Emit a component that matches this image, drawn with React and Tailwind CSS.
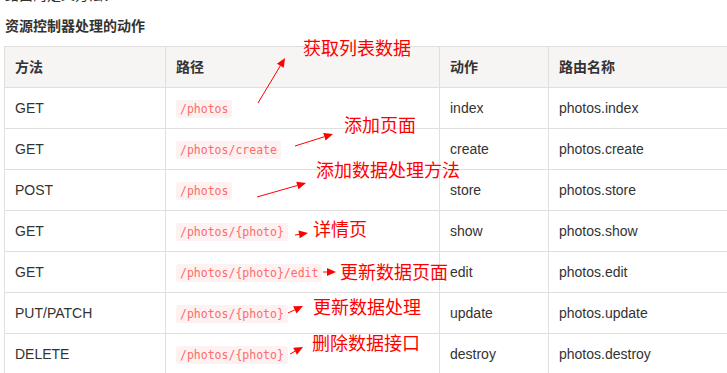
import React from 'react';

const rows = [
  { method: 'GET', path: '/photos', action: 'index', name: 'photos.index' },
  { method: 'GET', path: '/photos/create', action: 'create', name: 'photos.create' },
  { method: 'POST', path: '/photos', action: 'store', name: 'photos.store' },
  { method: 'GET', path: '/photos/{photo}', action: 'show', name: 'photos.show' },
  { method: 'GET', path: '/photos/{photo}/edit', action: 'edit', name: 'photos.edit' },
  { method: 'PUT/PATCH', path: '/photos/{photo}', action: 'update', name: 'photos.update' },
  { method: 'DELETE', path: '/photos/{photo}', action: 'destroy', name: 'photos.destroy' },
];

// hand-drawn annotations over the table
const notes = [
  { text: '获取列表数据', x: 303, y: 37 },
  { text: '添加页面', x: 344, y: 114 },
  { text: '添加数据处理方法', x: 316, y: 159 },
  { text: '详情页', x: 313, y: 218 },
  { text: '更新数据页面', x: 340, y: 261 },
  { text: '更新数据处理', x: 313, y: 296 },
  { text: '删除数据接口', x: 312, y: 332 },
];

const arrows = [
  [258, 103, 285, 58],
  [295, 146, 333, 134],
  [257, 197, 306, 183],
  [295, 235, 308, 233],
  [323, 272, 336, 272],
  [288, 313, 303, 306],
  [290, 354, 303, 347],
];

const Arrow = ({ x1, y1, x2, y2 }) => {
  const a = Math.atan2(y2 - y1, x2 - x1);
  const len = 9;
  const w = 4;
  const bx = x2 - len * Math.cos(a);
  const by = y2 - len * Math.sin(a);
  const p1 = `${bx + w * Math.sin(a)},${by - w * Math.cos(a)}`;
  const p2 = `${bx - w * Math.sin(a)},${by + w * Math.cos(a)}`;
  return (
    <g>
      <line x1={x1} y1={y1} x2={bx} y2={by} stroke="#ff0000" strokeWidth="1" />
      <polygon points={`${x2},${y2} ${p1} ${p2}`} fill="#ff0000" />
    </g>
  );
};

const App = () => {
  return (
    <div className="relative w-[727px] h-[373px] overflow-hidden bg-white text-[#333] font-['Liberation_Sans','Noto_Sans_CJK_SC',sans-serif]">
      <p className="-mt-[15px] pl-[5px] text-[14px] leading-[20px]">路由的定义方法：</p>
      <p className="mt-[11px] pl-[5px] text-[14px] leading-[20px] font-bold">资源控制器处理的动作</p>

      <table className="mt-[10px] ml-[4px] w-[820px] border-collapse table-fixed text-[14px]">
        <colgroup>
          <col className="w-[161px]" />
          <col className="w-[274px]" />
          <col className="w-[109px]" />
          <col />
        </colgroup>
        <thead>
          <tr className="h-[41px] bg-[#f6f5f4]">
            <th className="border border-[#dfdfdf] px-[10px] text-left font-bold">方法</th>
            <th className="border border-[#dfdfdf] px-[10px] text-left font-bold">路径</th>
            <th className="border border-[#dfdfdf] px-[10px] text-left font-bold">动作</th>
            <th className="border border-[#dfdfdf] px-[10px] text-left font-bold">路由名称</th>
          </tr>
        </thead>
        <tbody>
          {rows.map((r, i) => (
            <tr key={i} className="h-[41px]">
              <td className="border border-[#dfdfdf] px-[10px]">{r.method}</td>
              <td className="border border-[#dfdfdf] px-[10px]">
                <code className="inline-block rounded-[3px] bg-[#fdf1f1] px-[4px] leading-[18px] text-[11.5px] text-[#ff6a6a] font-['DejaVu_Sans_Mono',monospace]">
                  {r.path}
                </code>
              </td>
              <td className="border border-[#dfdfdf] px-[10px]">{r.action}</td>
              <td className="border border-[#dfdfdf] px-[10px]">{r.name}</td>
            </tr>
          ))}
        </tbody>
      </table>

      <svg className="absolute left-0 top-0 pointer-events-none" width="727" height="373">
        {arrows.map((a, i) => (
          <Arrow key={i} x1={a[0]} y1={a[1]} x2={a[2]} y2={a[3]} />
        ))}
      </svg>

      {notes.map((n, i) => (
        <span
          key={i}
          className="absolute whitespace-nowrap text-[18px] leading-[20px] text-[#ff0000] font-['Noto_Sans_CJK_SC',sans-serif]"
          style={{ left: n.x, top: n.y }}
        >
          {n.text}
        </span>
      ))}
    </div>
  );
};

export default App;
